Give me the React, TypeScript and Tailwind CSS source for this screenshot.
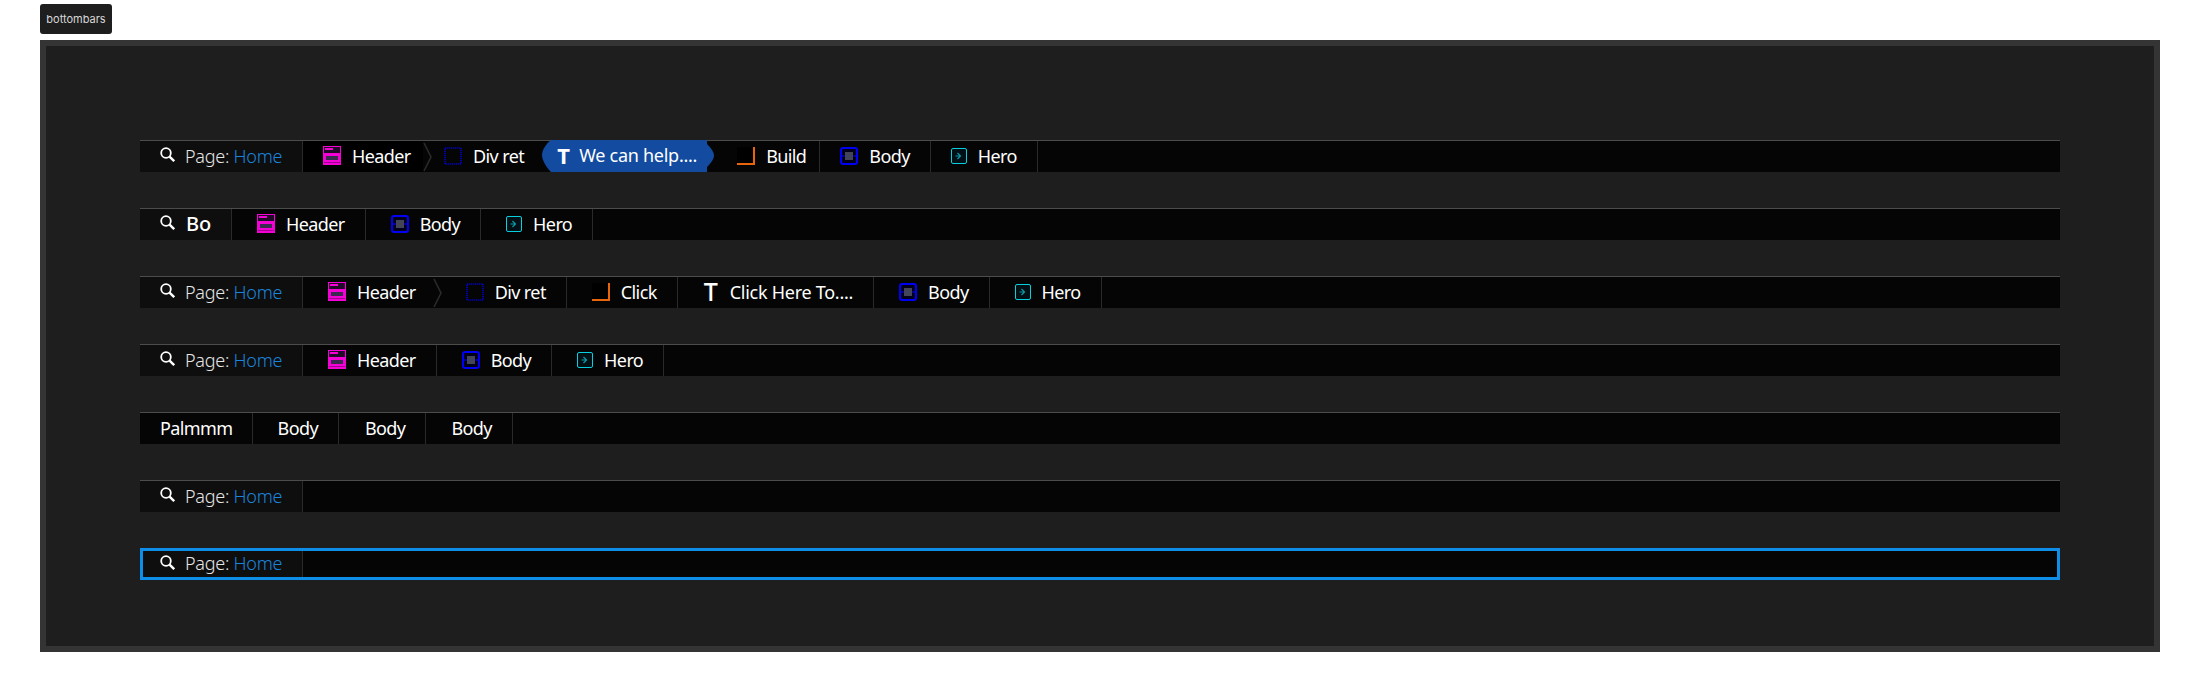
import React from 'react'

const font = { fontFamily: '"Noto Sans", "Open Sans", sans-serif' }

function SearchIcon() {
  return (
    <svg width="15" height="15" viewBox="0 0 15 15" className="shrink-0 -mt-1">
      <circle cx="6" cy="6" r="4.8" fill="none" stroke="#fff" strokeWidth="1.8" />
      <path d="M9.6 9.6 L14.2 14.2" stroke="#fff" strokeWidth="2.4" />
    </svg>
  )
}

function HeaderIcon() {
  return (
    <svg width="18" height="19" viewBox="0 0 18 19" className="shrink-0 -mt-[2px]">
      <rect width="18" height="19" fill="#f500d5" />
      <rect x="1" y="1" width="16" height="6" fill="#200a28" />
      <rect x="2" y="2" width="8" height="2" fill="#f500d5" />
      <rect x="3" y="10" width="12" height="4" fill="#3b2a50" />
      <rect x="1" y="16" width="16" height="1" fill="#a00090" />
    </svg>
  )
}

function DivIcon() {
  return (
    <svg width="18" height="18" viewBox="0 0 18 18" className="shrink-0 -mt-[2px]">
      <rect x="1" y="1" width="16" height="16" fill="none" stroke="#0000c8" strokeWidth="1.6" strokeDasharray="1.2 0.8" />
    </svg>
  )
}

function BuildIcon() {
  return (
    <svg width="18" height="18" viewBox="0 0 18 18" className="shrink-0 -mt-[2px]">
      <rect width="18" height="18" fill="#000" />
      <path d="M0 17 H17 V0" fill="none" stroke="#e8650c" strokeWidth="2" />
    </svg>
  )
}

function BodyIcon() {
  return (
    <svg width="18" height="18" viewBox="0 0 18 18" className="shrink-0 -mt-[2px]">
      <rect x="1" y="1" width="16" height="16" rx="2" fill="#00001a" stroke="#0000f5" strokeWidth="2" />
      <rect x="5" y="5" width="8" height="8" fill="#444458" />
      <path d="M2 9 H5 M13 9 H16" stroke="#0000f5" strokeWidth="1" />
    </svg>
  )
}

function HeroIcon() {
  return (
    <svg width="16" height="16" viewBox="0 0 16 16" className="shrink-0 -mt-[2px]">
      <rect x="0.5" y="0.5" width="15" height="15" rx="1.5" fill="#001014" stroke="#08cfe0" strokeWidth="1" />
      <path d="M6.5 5 L9.5 8 L6.5 11 M4.5 8 H9" fill="none" stroke="#0a9aa8" strokeWidth="1.2" />
    </svg>
  )
}

function Chevron() {
  return (
    <svg width="9" height="30" viewBox="0 0 9 30" className="shrink-0">
      <path d="M1 1 L8 15 L1 29" fill="none" stroke="#2b2b2b" strokeWidth="1.6" />
    </svg>
  )
}

function Label({ children, loose }: { children: React.ReactNode; loose?: boolean }) {
  return (
    <span
      className={`text-[18px] leading-none -mt-[2px] whitespace-nowrap text-white ${
        loose ? 'tracking-[-0.27px]' : 'tracking-[-0.6px]'
      }`}
    >
      {children}
    </span>
  )
}

function Cell({
  icon,
  label,
  className,
  loose,
}: {
  icon?: React.ReactNode
  label: string
  className: string
  loose?: boolean
}) {
  return (
    <div className={`flex items-center gap-[11px] text-white border-r border-[#2a2a2a] ${className}`}>
      {icon}
      <Label loose={loose}>{label}</Label>
    </div>
  )
}

function PageCell({ focused }: { focused?: boolean }) {
  return (
    <div
      className={`flex items-center gap-[10px] bg-[#0e0e0e] border-r border-[#2a2a2a] shrink-0 ${
        focused ? 'w-[160px] pl-[17px]' : 'w-[163px] pl-5'
      }`}
    >
      <SearchIcon />
      <span className="text-[18px] leading-none font-light tracking-[-0.25px] -mt-[2px] text-[#e6e6e6] whitespace-nowrap">
        Page: <span className="text-[#1b84dc]">Home</span>
      </span>
    </div>
  )
}

function Bar({ children, focused }: { children?: React.ReactNode; focused?: boolean }) {
  return (
    <div
      className={`flex h-8 shrink-0 bg-[#050505] ${
        focused ? 'border-[3px] border-[#0e8ee9]' : 'border-t border-[#4c4c4c]'
      }`}
    >
      {children}
    </div>
  )
}

export default function App() {
  return (
    <div className="min-h-screen bg-white pt-1" style={font}>
      <div
        className="ml-10 w-[72px] h-[30px] flex items-center justify-center rounded-[3px] bg-[#1e1e1e] text-[#d8d8d8] text-[11px]"
        style={{ fontFamily: 'Inter, sans-serif' }}
      >
        bottombars
      </div>
      <div className="ml-10 mt-[6px] w-[2120px] h-[612px] border-[6px] border-[#343434] bg-[#1e1e1e] pt-[94px] px-[94px] flex flex-col gap-9">
        <Bar>
          <PageCell />
          <div className="flex items-center bg-black pl-5 gap-[11px] w-[120px] text-white">
            <HeaderIcon />
            <Label>Header</Label>
          </div>
          <div className="flex items-center gap-[12px]">
            <Chevron />
            <DivIcon />
            <div className="-ml-px flex items-center">
              <Label>Div ret</Label>
            </div>
          </div>
          <div className="relative flex items-center gap-[9px] ml-[27px] w-[156px] pl-[6px] bg-[#124ba0] text-white -mt-px">
            <svg width="9" height="32" viewBox="0 0 9 32" className="absolute -left-[9px] top-0">
              <path d="M9 0 C4 4 0 10 0 15 C0 20 4 27 9 32 Z" fill="#124ba0" />
            </svg>
            <svg width="7" height="23" viewBox="0 0 7 23" className="absolute -right-[7px] top-[4px]">
              <path d="M0 0 C4 4 7 8 7 11.5 C7 15 4 19 0 23 Z" fill="#124ba0" />
            </svg>
            <span className="text-[22px] leading-none font-bold w-[13px] flex justify-center shrink-0 -mt-[2px]">T</span>
            <Label loose>We can help....</Label>
          </div>
          <Cell icon={<BuildIcon />} label="Build" className="pl-[30px] pr-[13px]" />
          <Cell icon={<BodyIcon />} label="Body" className="pl-5 pr-5" />
          <Cell icon={<HeroIcon />} label="Hero" className="pl-5 pr-5" />
        </Bar>

        <Bar>
          <div className="flex items-center w-[92px] pl-5 gap-[11px] bg-[#0e0e0e] border-r border-[#2a2a2a]">
            <SearchIcon />
            <span className="text-[20px] leading-none font-medium -mt-[2px] text-white">Bo</span>
          </div>
          <Cell icon={<HeaderIcon />} label="Header" className="pl-[25px] pr-5" />
          <Cell icon={<BodyIcon />} label="Body" className="pl-[25px] pr-5" />
          <Cell icon={<HeroIcon />} label="Hero" className="pl-[25px] pr-5" />
        </Bar>

        <Bar>
          <PageCell />
          <div className="flex items-center pl-[25px] gap-[11px] text-white">
            <HeaderIcon />
            <Label>Header</Label>
          </div>
          <div className="flex items-center pl-[17px] gap-[24px] pr-5 border-r border-[#2a2a2a] text-white">
            <Chevron />
            <div className="flex items-center gap-[11px]">
              <DivIcon />
              <Label>Div ret</Label>
            </div>
          </div>
          <Cell icon={<BuildIcon />} label="Click" className="pl-[25px] pr-5" />
          <Cell
            icon={<span className="text-[25px] leading-none font-medium w-[16px] flex justify-center shrink-0 -mt-[2px]">T</span>}
            label="Click Here To...."
            loose
            className="pl-[25px] pr-5"
          />
          <Cell icon={<BodyIcon />} label="Body" className="pl-[25px] pr-5" />
          <Cell icon={<HeroIcon />} label="Hero" className="pl-[25px] pr-5" />
        </Bar>

        <Bar>
          <PageCell />
          <Cell icon={<HeaderIcon />} label="Header" className="pl-[25px] pr-5" />
          <Cell icon={<BodyIcon />} label="Body" className="pl-[25px] pr-5" />
          <Cell icon={<HeroIcon />} label="Hero" className="pl-[25px] pr-5" />
        </Bar>

        <Bar>
          <Cell label="Palmmm" className="pl-5 pr-[19px]" />
          <Cell label="Body" className="pl-[25px] pr-5" />
          <Cell label="Body" className="pl-[26px] pr-5" />
          <Cell label="Body" className="pl-[25px] pr-5" />
        </Bar>

        <Bar>
          <PageCell />
        </Bar>

        <Bar focused>
          <PageCell focused />
        </Bar>
      </div>
    </div>
  )
}
